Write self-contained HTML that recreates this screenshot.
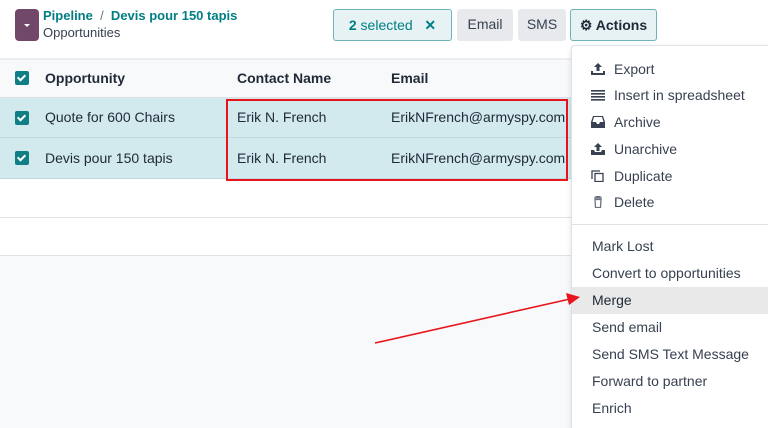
<!DOCTYPE html>
<html style="overflow:hidden;height:428px"><head><meta charset="utf-8"><style>
*{box-sizing:border-box;margin:0;padding:0}
body{width:768px;height:428px;overflow:hidden;background:#fff;font-family:"Liberation Sans",sans-serif;font-size:14px;color:#374151;position:relative}
.abs{position:absolute}
.btn{position:absolute;top:9px;height:32px;border-radius:3px;line-height:30px;font-size:14px;text-align:center}
.cb{position:absolute;left:15px;width:14px;height:14px;background:#0f7f85;border-radius:2px}
.cb:after{content:"";position:absolute;left:4px;top:2px;width:3px;height:6px;border:solid #fff;border-width:0 2px 2px 0;transform:rotate(45deg)}
.row{position:absolute;left:0;width:571px;height:40px;background:#d2e9ee;border-bottom:1px solid #bcd9e0}
.t{position:absolute;line-height:40px}
.menu{position:absolute;left:571px;top:45px;width:197px;height:383px;background:#fff;border:1px solid #dee2e6;border-bottom:none;border-right:none;border-radius:4px 0 0 0;box-shadow:0 2px 6px rgba(0,0,0,.12)}
.mi{position:absolute;left:20px;height:26px;line-height:26px;font-size:14px;color:#374151}
.ic{position:absolute;left:-1px;top:7px;width:14px;height:12px}
</style></head><body>
<div class="abs" style="left:15px;top:9px;width:24px;height:32px;background:#71486a;border-radius:4px"></div>
<div class="abs" style="left:24px;top:24px;width:0;height:0;border-left:3px solid transparent;border-right:3px solid transparent;border-top:3px solid #fff"></div>
<div class="abs" style="left:43px;top:8px;font-size:13px;color:#017e84;font-weight:bold">Pipeline <span style="color:#6b7280;font-weight:normal">&nbsp;/&nbsp;</span> Devis pour 150 tapis</div>
<div class="abs" style="left:43px;top:25px;font-size:13px">Opportunities</div>

<div class="btn" style="left:333px;width:119px;background:#e6f2f3;border:1px solid #6fb3b7;color:#017e84"><b>2</b> selected &nbsp;&nbsp;<b>✕</b></div>
<div class="btn" style="left:457px;width:56px;background:#e7e9ed">Email</div>
<div class="btn" style="left:518px;width:48px;background:#e7e9ed">SMS</div>
<div class="btn" style="left:570px;width:87px;background:#e6f2f3;border:1px solid #6fb3b7;color:#1f2937;font-weight:bold">⚙ Actions</div>

<div class="abs" style="left:0;top:58px;width:571px;height:40px;background:#f8f9fa;border-top:2px solid #eceef0;border-bottom:1px solid #dee2e6"></div>
<div class="cb" style="top:71px"></div>
<div class="t" style="left:45px;top:58px;font-weight:bold;color:#1f2937">Opportunity</div>
<div class="t" style="left:237px;top:58px;font-weight:bold;color:#1f2937">Contact Name</div>
<div class="t" style="left:391px;top:58px;font-weight:bold;color:#1f2937">Email</div>

<div class="row" style="top:98px"></div>
<div class="cb" style="top:111px"></div>
<div class="t" style="left:45px;top:97px;color:#1f2937">Quote for 600 Chairs</div>
<div class="t" style="left:237px;top:97px;color:#1f2937">Erik N. French</div>
<div class="t" style="left:391px;top:97px;color:#1f2937">ErikNFrench@armyspy.com</div>
<div class="row" style="top:138px;height:41px"></div>
<div class="cb" style="top:151px"></div>
<div class="t" style="left:45px;top:138px;color:#1f2937">Devis pour 150 tapis</div>
<div class="t" style="left:237px;top:138px;color:#1f2937">Erik N. French</div>
<div class="t" style="left:391px;top:138px;color:#1f2937">ErikNFrench@armyspy.com</div>
<div class="abs" style="left:226px;top:99px;width:342px;height:82px;border:2px solid #e8141b"></div>

<div class="abs" style="left:0;top:217px;width:571px;height:1px;background:#dee2e6"></div>
<div class="abs" style="left:0;top:255px;width:571px;height:173px;background:#f8f9fb;border-top:1px solid #dee2e6"></div>

<div class="menu">
<div class="mi" style="top:10px"><svg class="ic" viewBox="0 0 14 12"><path d="M7 0L3 4h2.5v4h3V4H11z M0 8h2v2h10V8h2v4H0z" fill="#374151"/></svg><span style="margin-left:22px">Export</span></div>
<div class="mi" style="top:36px"><svg class="ic" viewBox="0 0 14 12"><path d="M0 1h14v1.6H0zM0 4h14v1.6H0zM0 7h14v1.6H0zM0 10h14v1.6H0z" fill="#374151"/></svg><span style="margin-left:22px">Insert in spreadsheet</span></div>
<div class="mi" style="top:63px"><svg class="ic" viewBox="0 0 14 12"><path d="M2 0h10l2 6v6H0V6zM1.5 6h3.5l1 2h2l1-2h3.5L11 1H3z" fill="#374151"/></svg><span style="margin-left:22px">Archive</span></div>
<div class="mi" style="top:90px"><svg class="ic" viewBox="0 0 14 12"><path d="M7 0L3 4h2.5v4h3V4H11z M0 7h3l1 2h6l1-2h3v5H0z" fill="#374151"/></svg><span style="margin-left:22px">Unarchive</span></div>
<div class="mi" style="top:117px"><svg class="ic" viewBox="0 0 14 12"><path d="M1 9V1h8M4 3.5h8v8H4z" fill="none" stroke="#374151" stroke-width="1.3"/></svg><span style="margin-left:22px">Duplicate</span></div>
<div class="mi" style="top:143px"><svg class="ic" viewBox="0 0 14 12"><path d="M3 2h8M5 2V.7h4V2M4 3.5h6l-.5 8h-5z" fill="none" stroke="#6b7280" stroke-width="1.3"/></svg><span style="margin-left:22px">Delete</span></div>
<div class="abs" style="left:0;top:178px;width:197px;height:1px;background:#dee2e6"></div>
<div class="mi" style="top:187px">Mark Lost</div>
<div class="mi" style="top:214px">Convert to opportunities</div>
<div class="abs" style="left:0;top:241px;width:197px;height:27px;background:#e9e9e9"></div>
<div class="mi" style="top:241px;color:#1f2937">Merge</div>
<div class="mi" style="top:268px">Send email</div>
<div class="mi" style="top:295px">Send SMS Text Message</div>
<div class="mi" style="top:322px">Forward to partner</div>
<div class="mi" style="top:349px">Enrich</div>
</div>

<svg class="abs" style="left:0;top:0" width="768" height="428"><line x1="375" y1="343" x2="570" y2="299" stroke="#e8141b" stroke-width="1.6"/><path d="M580 297L566 293L569 305z" fill="#e8141b"/></svg>
</body></html>
